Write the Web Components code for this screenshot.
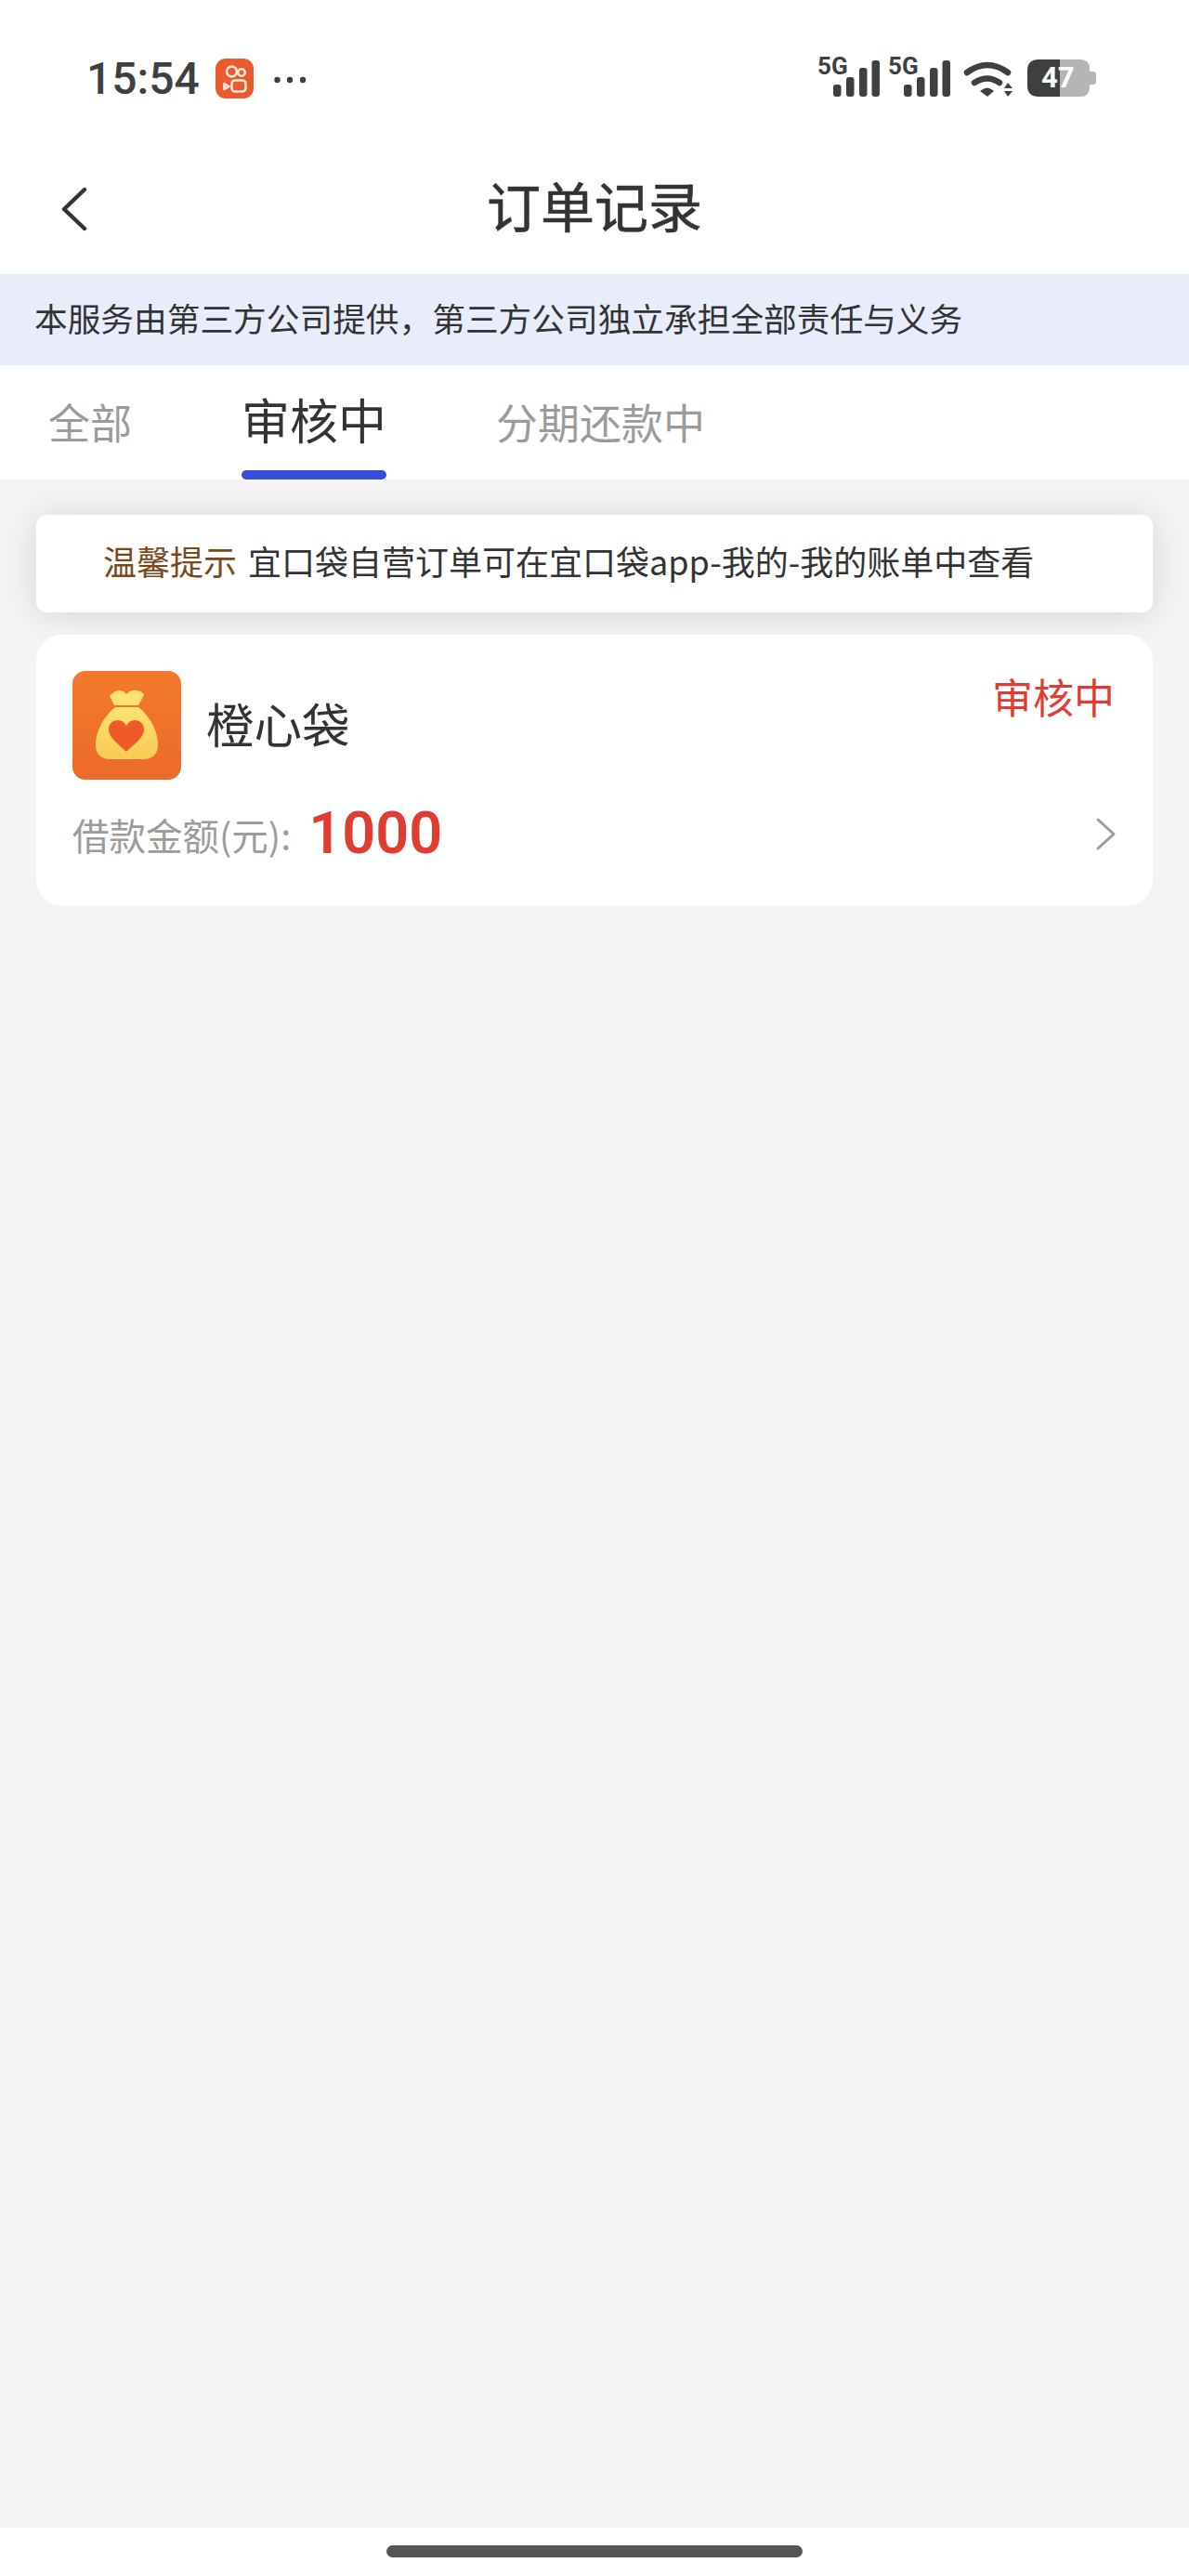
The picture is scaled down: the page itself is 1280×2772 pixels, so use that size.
<!DOCTYPE html>
<html lang="zh">
<head>
<meta charset="utf-8">
<title>订单记录</title>
<style>
  html, body { margin: 0; padding: 0; height: 100%; }
  body {
    font-family: "Noto Sans CJK SC", "Noto Sans", sans-serif;
    color: #333;
    background: #f4f4f4;
  }
  order-page { height: 2772px; }
</style>
</head>
<body>
<order-page>
  <status-bar></status-bar>
  <nav-bar>订单记录</nav-bar>
  <notice-banner>本服务由第三方公司提供，第三方公司独立承担全部责任与义务</notice-banner>
  <tab-strip>
    <tab-item>全部</tab-item>
    <tab-item active>审核中</tab-item>
    <tab-item>分期还款中</tab-item>
  </tab-strip>
  <tip-card label="温馨提示">宜口袋自营订单可在宜口袋app-我的-我的账单中查看</tip-card>
  <order-card name="橙心袋" status="审核中" amount="1000"></order-card>
  <home-bar></home-bar>
</order-page>

<script>
class OrderPage extends HTMLElement {
    constructor() {
        super();
        this.attachShadow({ mode: 'open' });
    }
    connectedCallback() {
        this.shadowRoot.innerHTML = `
            <style>
                :host { display: flex; flex-direction: column; }
                ::slotted(home-bar) { margin-top: auto; }
            </style>
            <slot></slot>
        `;
    }
}

// one "5G" mark with its four bars
class SignalIcon extends HTMLElement {
    constructor() {
        super();
        this.attachShadow({ mode: 'open' });
    }
    connectedCallback() {
        this.shadowRoot.innerHTML = `
            <style>
                :host { display: grid; width: 67px; height: 44px; color: #3f3f3f; }
                span, svg { grid-area: 1 / 1; }
                span { font: 700 26px/20px "Roboto", sans-serif; }
                svg { display: block; }
            </style>
            <span>5G</span>
            <svg width="67" height="44" viewBox="0 0 67 44" fill="#3f3f3f">
                <rect x="17" y="30" width="8.500" height="13" rx="3"/>
                <rect x="31" y="22" width="8.500" height="21" rx="3"/>
                <rect x="45" y="12" width="8.500" height="31" rx="3"/>
                <rect x="58.500" y="4" width="8.500" height="39" rx="3"/>
            </svg>
        `;
    }
}

class StatusBar extends HTMLElement {
    constructor() {
        super();
        this.attachShadow({ mode: 'open' });
    }
    connectedCallback() {
        this.shadowRoot.innerHTML = `
            <style>
                :host {
                    display: flex;
                    align-items: flex-start;
                    height: 166px;
                    box-sizing: border-box;
                    padding: 61px 100px 0 93px;
                    background: #fff;
                    color: #3f3f3f;
                }
                .time { font: 500 48px/48px "Roboto", sans-serif; width: 139px; }
                .app { display: block; margin-top: 2px; }
                .more { display: block; margin: 21px 0 0 22px; }
                .right { margin-left: auto; display: flex; align-items: flex-start; }
                .wifi { display: block; margin: 5px 15px 0 14px; }
                .battery { display: grid; width: 74px; height: 40px; margin-top: 3px; }
                .battery svg, .battery span { grid-area: 1 / 1; }
                .battery span {
                    font: 700 31px/40px "Roboto", sans-serif;
                    color: #fff;
                    padding-left: 15px;
                }
                signal-icon + signal-icon { margin-left: 9px; }
            </style>
            <div class="time">15:54</div>
            <svg class="app" width="41" height="43" viewBox="0 0 41 43">
                <rect width="41" height="43" rx="11" fill="#ea5a2b"/>
                <g fill="none" stroke="#fde9dc" stroke-width="2.6">
                    <circle cx="17.500" cy="14" r="5.400"/>
                    <circle cx="28" cy="15" r="3.800"/>
                    <rect x="17.500" y="23.500" width="15" height="12" rx="3.500"/>
                    <path d="M9.500 27 L14.500 30 L9.500 33 Z" stroke-linejoin="round"/>
                </g>
            </svg>
            <svg class="more" width="35" height="8" viewBox="0 0 35 8" fill="#3f3f3f">
                <circle cx="3.500" cy="4" r="3.200"/>
                <circle cx="17" cy="4" r="3.200"/>
                <circle cx="31" cy="4" r="3.200"/>
            </svg>
            <div class="right">
                <signal-icon></signal-icon>
                <signal-icon></signal-icon>
                <svg class="wifi" width="54" height="39" viewBox="0 0 54 39" fill="#3f3f3f">
                    <path d="M4 12 Q26 -4 48 12" fill="none" stroke="#3f3f3f" stroke-width="6.500" stroke-linecap="round"/>
                    <path d="M12 23 Q26 14 39 23" fill="none" stroke="#3f3f3f" stroke-width="6.500" stroke-linecap="round"/>
                    <path d="M18 32 Q26 25 33 32 L26 38 Z"/>
                    <path d="M48 23 L53 29 H44 Z"/>
                    <path d="M44 32 H53 L48 38 Z"/>
                </svg>
                <div class="battery">
                    <svg width="74" height="40" viewBox="0 0 74 40">
                        <path d="M35 0 H57 Q67 0 67 10 V30 Q67 40 57 40 H35 Z" fill="#b5b5b5"/>
                        <path d="M67 13 H70 Q74 13 74 17 V23 Q74 27 70 27 H67 Z" fill="#b5b5b5"/>
                        <path d="M35 0 H12 Q0 0 0 12 V28 Q0 40 12 40 H35 Z" fill="#3f3f3f"/>
                    </svg>
                    <span>47</span>
                </div>
            </div>
        `;
    }
}

class NavBar extends HTMLElement {
    constructor() {
        super();
        this.attachShadow({ mode: 'open' });
    }
    connectedCallback() {
        this.shadowRoot.innerHTML = `
            <style>
                :host {
                    display: grid;
                    grid-template-columns: 1fr auto 1fr;
                    align-items: center;
                    height: 129px;
                    background: #fff;
                    padding-bottom: 22px;
                    box-sizing: border-box;
                }
                svg { display: block; margin: 11px 0 0 63px; }
                .title { font-size: 58px; line-height: 80px; color: #333; -webkit-text-stroke: 0.6px #333; }
            </style>
            <svg width="33" height="48" viewBox="0 0 33 48" fill="none" stroke="#333" stroke-width="4.400" stroke-linecap="round" stroke-linejoin="round">
                <path d="M28 3 L6 24 L28 45"/>
            </svg>
            <div class="title"><slot></slot></div>
        `;
    }
}

class NoticeBanner extends HTMLElement {
    constructor() {
        super();
        this.attachShadow({ mode: 'open' });
    }
    connectedCallback() {
        this.shadowRoot.innerHTML = `
            <style>
                :host {
                    display: flex;
                    align-items: center;
                    height: 98px;
                    padding: 0 0 6px 37px;
                    box-sizing: border-box;
                    background: #e9edfb;
                    font-size: 35.700px;
                    color: #333;
                }
            </style>
            <slot></slot>
        `;
    }
}

class TabStrip extends HTMLElement {
    constructor() {
        super();
        this.attachShadow({ mode: 'open' });
    }
    connectedCallback() {
        this.shadowRoot.innerHTML = `
            <style>
                :host {
                    display: flex;
                    gap: 118px;
                    height: 123px;
                    padding-left: 52px;
                    background: #fff;
                    position: relative;
                    z-index: 1;
                }
            </style>
            <slot></slot>
        `;
    }
}

class TabItem extends HTMLElement {
    constructor() {
        super();
        this.attachShadow({ mode: 'open' });
    }
    connectedCallback() {
        this.shadowRoot.innerHTML = `
            <style>
                :host {
                    display: flex;
                    flex-direction: column;
                    padding-top: 29px;
                    box-sizing: border-box;
                    font-size: 45px;
                    line-height: 64px;
                    color: #9b9b9b;
                }
                :host([active]) { padding-top: 26px; font-size: 52px; color: #333; }
                :host([active])::after {
                    content: "";
                    margin-top: auto;
                    height: 10px;
                    border-radius: 5px;
                    background: #3a4fd8;
                }
            </style>
            <slot></slot>
        `;
    }
}

class TipCard extends HTMLElement {
    constructor() {
        super();
        this.attachShadow({ mode: 'open' });
    }
    connectedCallback() {
        const label = this.getAttribute('label');
        this.shadowRoot.innerHTML = `
            <style>
                :host {
                    display: flex;
                    align-items: center;
                    gap: 12px;
                    height: 105px;
                    margin: 38px 39px 0;
                    padding: 0 0 8px 72px;
                    box-sizing: border-box;
                    border-radius: 12px;
                    background: #fff;
                    box-shadow: 0 2px 36px rgba(0, 0, 0, 0.13);
                    font-size: 36px;
                    color: #333;
                }
                .label { color: #7a4a1e; }
            </style>
            <span class="label">${label}</span>
            <span><slot></slot></span>
        `;
    }
}

class OrderCard extends HTMLElement {
    constructor() {
        super();
        this.attachShadow({ mode: 'open' });
    }
    connectedCallback() {
        const name = this.getAttribute('name');
        const status = this.getAttribute('status');
        const amount = this.getAttribute('amount');
        this.shadowRoot.innerHTML = `
            <style>
                :host {
                    display: flex;
                    flex-direction: column;
                    height: 292px;
                    margin: 24px 39px 0;
                    padding: 39px 39px 0;
                    box-sizing: border-box;
                    border-radius: 28px;
                    background: #fff;
                }
                .top { display: flex; align-items: flex-start; height: 117px; }
                .logo { display: block; flex: none; }
                .name { font-size: 51.500px; line-height: 111px; margin-left: 27px; color: #333; }
                .status { margin-left: auto; font-size: 44px; line-height: 54px; color: #e03c31; margin-right: 2px; }
                .bottom { display: flex; align-items: center; height: 84px; margin-top: 16px; }
                .caption { font-size: 39.500px; color: #9b9b9b; }
                .amount { font: 600 63px/86px "Roboto", sans-serif; color: #e03c31; margin-left: 19px; }
                .arrow { display: block; margin-left: auto; }
            </style>
            <div class="top">
                <svg class="logo" width="117" height="117" viewBox="0 0 117 117">
                    <defs>
                        <linearGradient id="bg" x1="0" y1="0" x2="0" y2="1">
                            <stop offset="0" stop-color="#f37a2c"/>
                            <stop offset="1" stop-color="#ec6a2b"/>
                        </linearGradient>
                        <linearGradient id="bag" x1="0" y1="0" x2="0" y2="1">
                            <stop offset="0" stop-color="#fee271"/>
                            <stop offset="1" stop-color="#f6cb55"/>
                        </linearGradient>
                    </defs>
                    <rect width="117" height="117" rx="14" fill="url(#bg)"/>
                    <path d="M40 27 Q45 21 50 21 Q55 21 58 25 Q63 20 69 21 Q76 22 77 26 L71 37 H45 Z" fill="#fee271"/>
                    <path d="M46 39 C36 47 25 62 25 80 C25 90 32 95 40 95 H77 C85 95 92 90 92 80 C92 62 81 47 71 39 Z" fill="url(#bag)"/>
                    <path d="M58 87 C50 79 39 72 39 63 C39 56 44 53 49 53 C53 53 56 55 58 59 C60 55 63 53 67 53 C72 53 77 56 77 63 C77 72 66 79 58 87 Z" fill="#ef5a28"/>
                </svg>
                <div class="name">${name}</div>
                <div class="status">${status}</div>
            </div>
            <div class="bottom">
                <span class="caption">借款金额(元):</span>
                <span class="amount">${amount}</span>
                <svg class="arrow" width="23" height="37" viewBox="0 0 23 37" fill="none" stroke="#9b9b9b" stroke-width="3" stroke-linecap="round" stroke-linejoin="round">
                    <path d="M3 3 L20 18.500 L3 34"/>
                </svg>
            </div>
        `;
    }
}

class HomeBar extends HTMLElement {
    constructor() {
        super();
        this.attachShadow({ mode: 'open' });
    }
    connectedCallback() {
        this.shadowRoot.innerHTML = `
            <style>
                :host {
                    display: flex;
                    justify-content: center;
                    height: 52px;
                    padding-top: 19px;
                    box-sizing: border-box;
                    background: #fff;
                }
                div { width: 448px; height: 13px; border-radius: 7px; background: #555; }
            </style>
            <div></div>
        `;
    }
}

customElements.define('order-page', OrderPage);
customElements.define('signal-icon', SignalIcon);
customElements.define('status-bar', StatusBar);
customElements.define('nav-bar', NavBar);
customElements.define('notice-banner', NoticeBanner);
customElements.define('tab-strip', TabStrip);
customElements.define('tab-item', TabItem);
customElements.define('tip-card', TipCard);
customElements.define('order-card', OrderCard);
customElements.define('home-bar', HomeBar);
</script>
</body>
</html>
